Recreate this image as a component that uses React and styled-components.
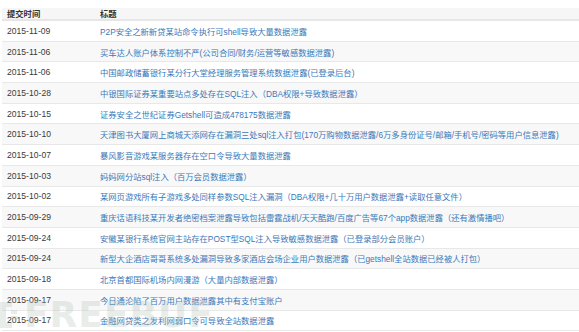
import React from 'react';
import styled, { createGlobalStyle } from 'styled-components';

const GlobalStyle = createGlobalStyle`
  html, body {
    margin: 0;
    padding: 0;
    background: #fff;
    overflow: hidden;
  }
  body {
    font-family: "Liberation Sans", "Noto Sans CJK SC", sans-serif;
  }
`;

const Page = styled.div`
  position: relative;
  width: 579px;
  height: 332px;
  padding: 8px 0 0 2px;
  box-sizing: border-box;
  overflow: hidden;
`;

const Table = styled.div`
  display: flex;
  flex-direction: column;
  width: 577px;
`;

const Row = styled.div`
  display: grid;
  grid-template-columns: 93px 1fr;
  align-items: center;
  height: ${({ $head }) => ($head ? '13px' : '20.7px')};
  box-sizing: border-box;
  border-bottom: ${({ $head }) => ($head ? '2px solid #e6e6e6' : '1px solid #e8e8e8')};
  background: ${({ $head, $striped }) => ($head ? '#f6f6f6' : $striped ? '#f8f8f8' : '#fff')};
`;

const HeadCell = styled.div`
  padding-left: 5px;
  font-size: 8.3px;
  font-weight: bold;
  color: #333;
  line-height: 10px;
  white-space: nowrap;
`;

const DateCell = styled.div`
  padding-left: 5px;
  font-size: 8.6px;
  color: #3a3a3a;
  white-space: nowrap;
`;

const TitleCell = styled.a`
  padding-left: 5px;
  font-size: 8.3px;
  color: #3b78b8;
  text-decoration: none;
  white-space: nowrap;
  overflow: hidden;
`;

const Watermark = styled.div`
  position: absolute;
  left: 0;
  bottom: 0;
  display: flex;
  align-items: center;
  gap: 2px;
  opacity: 0.3;
  pointer-events: none;
`;

const MarkText = styled.span`
  font-family: "DejaVu Sans", sans-serif;
  font-weight: bold;
  font-size: 36px;
  letter-spacing: 1px;
  color: #b9c4bb;
  line-height: 34px;
`;

const rows = [
  ['2015-11-09', 'P2P安全之新新贷某站命令执行可shell导致大量数据泄露'],
  ['2015-11-06', '买车达人账户体系控制不严(公司合同/财务/运营等敏感数据泄露)'],
  ['2015-11-06', '中国邮政储蓄银行某分行大堂经理服务管理系统数据泄露(已登录后台)'],
  ['2015-10-28', '中银国际证券某重要站点多处存在SQL注入（DBA权限+导致数据泄露）'],
  ['2015-10-15', '证券安全之世纪证券Getshell可造成478175数据泄露'],
  ['2015-10-10', '天津图书大厦网上商城天添网存在漏洞三处sql注入打包(170万购物数据泄露/6万多身份证号/邮箱/手机号/密码等用户信息泄露)'],
  ['2015-10-07', '暴风影音游戏某服务器存在空口令导致大量数据泄露'],
  ['2015-10-03', '妈妈网分站sql注入（百万会员数据泄露）'],
  ['2015-10-02', '某网页游戏所有子游戏多处同样参数SQL注入漏洞（DBA权限+几十万用户数据泄露+读取任意文件）'],
  ['2015-09-29', '重庆话语科技某开发者绝密档案泄露导致包括雷霆战机/天天酷跑/百度广告等67个app数据泄露（还有激情播吧）'],
  ['2015-09-24', '安徽某银行系统官网主站存在POST型SQL注入导致敏感数据泄露（已登录部分会员账户）'],
  ['2015-09-24', '新型大企酒店哥哥系统多处漏洞导致多家酒店会场企业用户数据泄露（已getshell全站数据已经被人打包）'],
  ['2015-09-18', '北京首都国际机场内网漫游（大量内部数据泄露）'],
  ['2015-09-17', '今日通沦陷了百万用户数据泄露其中有支付宝账户'],
  ['2015-09-17', '金融网贷类之发利网弱口令可导致全站数据泄露'],
];

const Logo = () => (
  <svg width="22" height="30" viewBox="0 0 22 30">
    <rect x="0" y="2" width="6" height="26" fill="#b9c4bb" />
    <rect x="0" y="2" width="12" height="5" fill="#b9c4bb" />
    <rect x="0" y="23" width="12" height="5" fill="#b9c4bb" />
    <rect x="11" y="10" width="6" height="4" fill="#b9c4bb" />
    <rect x="11" y="16" width="6" height="4" fill="#b9c4bb" />
  </svg>
);

export default function App() {
  return (
    <Page>
      <GlobalStyle />
      <Table>
        <Row $head>
          <HeadCell>提交时间</HeadCell>
          <HeadCell>标题</HeadCell>
        </Row>
        {rows.map(([date, title], i) => (
          <Row key={i} $striped={i % 2 === 1}>
            <DateCell>{date}</DateCell>
            <TitleCell href="#">{title}</TitleCell>
          </Row>
        ))}
      </Table>
      <Watermark>
        <Logo />
        <MarkText>FREEBUF</MarkText>
      </Watermark>
    </Page>
  );
}
